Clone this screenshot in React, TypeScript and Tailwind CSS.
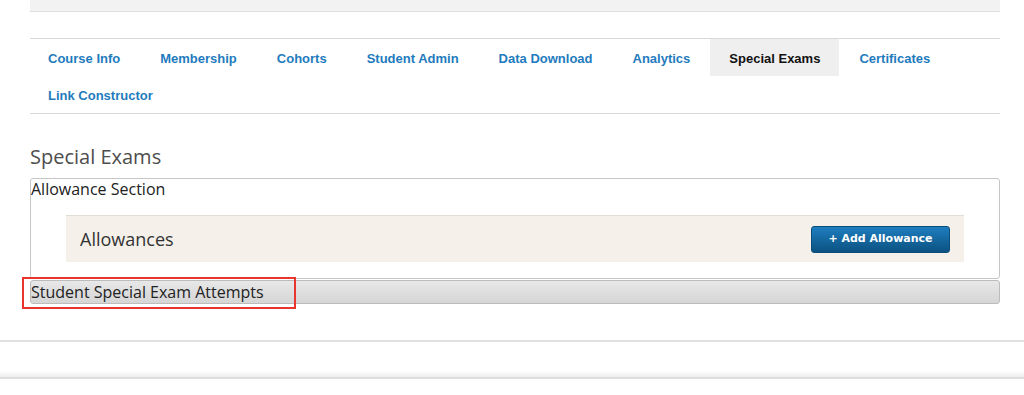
import React from "react";

const tabs = [
  "Course Info",
  "Membership",
  "Cohorts",
  "Student Admin",
  "Data Download",
  "Analytics",
  "Special Exams",
  "Certificates",
  "Link Constructor",
];

export default function App() {
  return (
    <div className="relative w-[1024px] h-[395px] overflow-hidden bg-white">
      <div className="ml-[30px] w-[970px]">
        <div className="h-[12px] bg-[#f2f2f2] border-b border-[#e0e0e0]" />
        <nav className="mt-[26px] border-t border-b border-[#d9d9d9]">
          <div className="-ml-[2px] flex flex-wrap font-['Liberation_Sans',Arial,sans-serif] text-[13px] font-bold">
            {tabs.map((t) => (
              <a
                key={t}
                className={
                  t === "Special Exams"
                    ? "h-[37px] pt-[2px] px-[19px] flex items-center bg-[#efefef] text-[#111]"
                    : "h-[37px] pt-[2px] px-[20px] flex items-center text-[#1f7bbd]"
                }
              >
                {t}
              </a>
            ))}
          </div>
        </nav>
        <div className="font-['Open_Sans',sans-serif]">
          <h2 className="mt-[29px] mb-[7px] text-[20px] leading-[28px] text-[#4d4d4d]">
            Special Exams
          </h2>
          <div className="border border-[#c6c6c6] rounded-[3px] bg-white pb-[16px]">
            <div className="text-[16px] leading-[20px] text-[#222]">Allowance Section</div>
            <div className="mt-[16px] mx-[35px] h-[47px] bg-[#f5f1ea] border-t border-[#e2ddd4] flex items-center justify-between pl-[14px] pr-[14px]">
              <span className="text-[18px] text-[#333]">Allowances</span>
              <button className="w-[139px] h-[27px] rounded-[3px] border border-[#0b4d7a] bg-gradient-to-b from-[#1e7ebf] to-[#0c5282] text-white text-[11px] font-bold font-['DejaVu_Sans',Verdana,sans-serif]">
                + Add Allowance
              </button>
            </div>
          </div>
          <div className="mt-[1px] h-[24px] border border-[#bcbcbc] rounded-[3px] bg-gradient-to-b from-[#e8e8e8] via-[#dedede] to-[#d6d6d6] flex items-center text-[16px] text-[#222]">
            Student Special Exam Attempts
          </div>
        </div>
      </div>
      <div className="mt-[36px] h-[2px] bg-[#e0e0e0]" />
      <div className="mt-[29px] h-[8px] bg-gradient-to-b from-[#ffffff] to-[#ededed] border-b-2 border-[#dedede]" />
      <div className="absolute left-[22px] top-[277px] w-[274px] h-[32px] border-2 border-[#e8362f]" />
    </div>
  );
}
